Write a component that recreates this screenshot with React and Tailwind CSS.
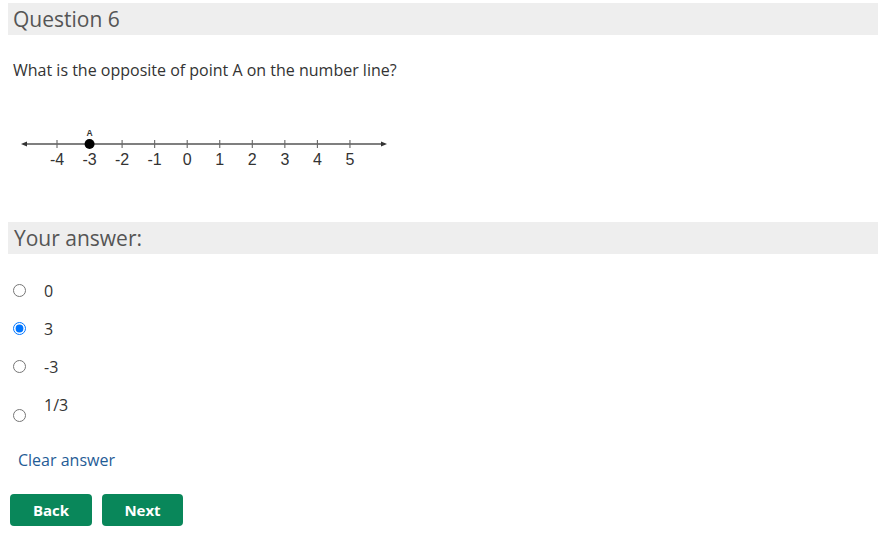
import React, { useState } from "react";

function NumberLine() {
  const ticks = [-4, -3, -2, -1, 0, 1, 2, 3, 4, 5];
  const x0 = 57;
  const step = 32.55;
  return (
    <svg width="380" height="52" viewBox="0 0 380 52" className="block">
      <g transform="translate(-20,-124)">
        <line x1="24" y1="144" x2="384" y2="144" stroke="#555" strokeWidth="1.4" />
        <polygon points="21,144 27,141.5 27,146.5" fill="#333" />
        <polygon points="387,144 381,141.5 381,146.5" fill="#333" />
        {ticks.map((t, i) => {
          const x = x0 + i * step;
          return (
            <g key={t}>
              <line x1={x} y1="140" x2={x} y2="148" stroke="#666" strokeWidth="1.1" />
              <text
                x={x}
                y="165"
                textAnchor="middle"
                fontFamily="'Liberation Sans', Arial, sans-serif"
                fontSize="16"
                fill="#333"
              >
                {t}
              </text>
            </g>
          );
        })}
        <circle cx={x0 + step} cy="144" r="5" fill="#000" />
        <text
          x={x0 + step}
          y="136"
          textAnchor="middle"
          fontFamily="'Liberation Sans', Arial, sans-serif"
          fontSize="8.5"
          fontWeight="bold"
          fill="#333"
        >
          A
        </text>
      </g>
    </svg>
  );
}

export default function App() {
  const [val, setVal] = useState("3");
  const options = ["0", "3", "-3"];
  return (
    <div
      className="bg-white min-h-[552px] pl-[8px] pt-[3px] text-[#333]"
      style={{ fontFamily: "'Open Sans', sans-serif" }}
    >
      <div className="bg-[#eeeeee] h-[32px] pl-[5px] text-[21px] leading-[32px] text-[#555]">
        Question 6
      </div>
      <p className="mt-[23px] pl-[5px] text-[16px] leading-[24px] text-[#333]">
        What is the opposite of point A on the number line?
      </p>
      <div className="mt-[42px] pl-[12px]">
        <NumberLine />
      </div>
      <div className="mt-[46px] bg-[#eeeeee] h-[32px] pl-[6px] text-[21px] leading-[32px] text-[#555]">
        Your answer:
      </div>
      <div className="mt-[17px] flex flex-col">
        {options.map((o) => (
          <label key={o} className="flex items-center h-[38px] cursor-pointer">
            <input
              type="radio"
              name="ans"
              checked={val === o}
              onChange={() => setVal(o)}
              className="ml-[5px] w-[13px] h-[13px] m-0"
            />
            <span className="ml-[18px] mt-[1px] text-[16px] leading-[24px]">{o}</span>
          </label>
        ))}
        <label className="flex items-start h-[44px] cursor-pointer">
          <input
            type="radio"
            name="ans"
            checked={val === "1/3"}
            onChange={() => setVal("1/3")}
            className="ml-[5px] mt-[24px] w-[13px] h-[13px] m-0"
          />
          <span className="ml-[18px] mt-[8px] text-[16px] leading-[24px]">1/3</span>
        </label>
      </div>
      <div className="mt-[19px] pl-[10px] text-[16px] leading-[24px] text-[#1f5c96]">
        Clear answer
      </div>
      <div className="mt-[22px] ml-[2px] flex gap-[10px]">
        <button className="w-[82px] h-[32px] rounded-[4px] bg-[#09875a] text-white font-bold text-[15px] leading-[30px]">
          Back
        </button>
        <button className="w-[81px] h-[32px] rounded-[4px] bg-[#09875a] text-white font-bold text-[15px] leading-[30px]">
          Next
        </button>
      </div>
    </div>
  );
}
